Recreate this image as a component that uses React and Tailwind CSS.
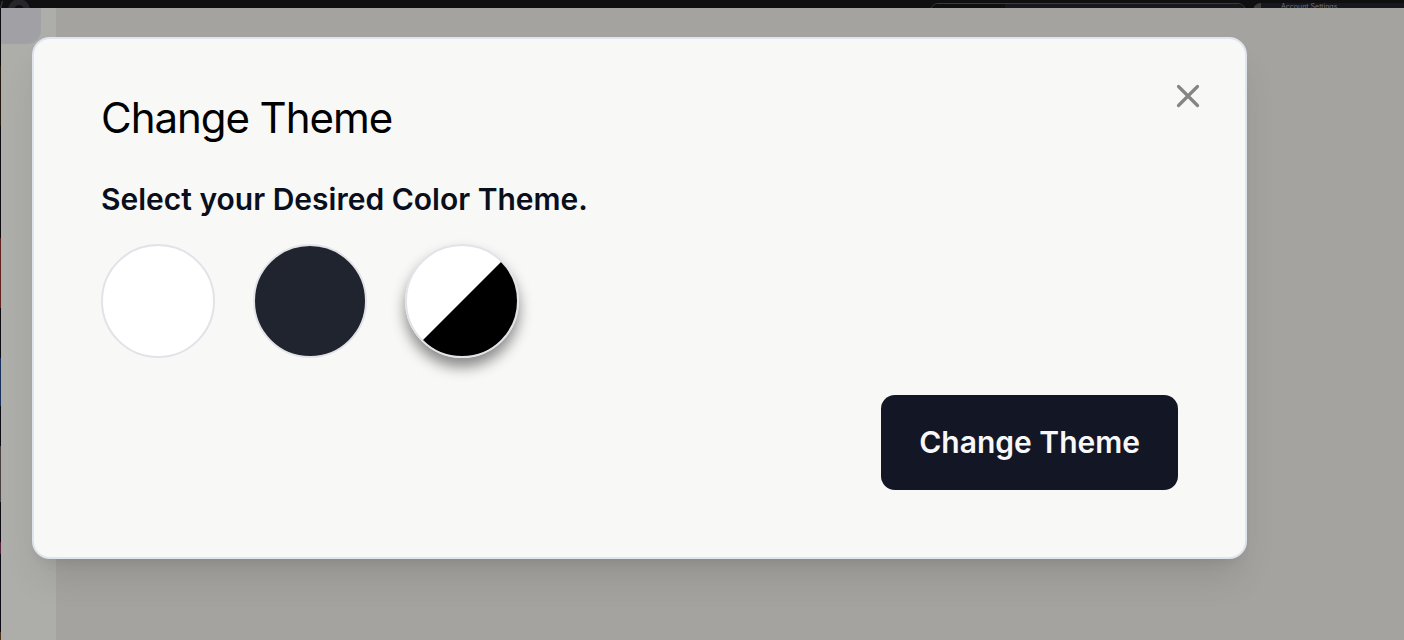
import { useState } from "react";

const themes = [
  { id: "light", label: "Light", swatch: "bg-white" },
  { id: "dark", label: "Dark", swatch: "bg-[#20242e]" },
  {
    id: "system",
    label: "System",
    swatch: "bg-[linear-gradient(135deg,#fff_49.6%,#000_50.4%)]",
  },
];

const edgeColors = [
  "h-[58px] bg-[#0c0a0c]",
  "h-[60px] bg-[#24190f]",
  "h-28 bg-[#0d0b10]",
  "h-[70px] bg-[#61211c]",
  "h-[50px] bg-[#0d0b12]",
  "h-12 bg-[#17305c]",
  "h-10 bg-[#0c0a12]",
  "h-14 bg-[#47413f]",
  "h-10 bg-[#0d0b12]",
  "h-3 bg-[#54223f]",
  "h-[78px] bg-[#0c0a12]",
  "grow bg-[#4c3318]",
];

function TopStrip() {
  return (
    <header className="flex h-2 items-start overflow-hidden bg-[#0f0f11]">
      <span className="h-2 w-2 text-[8px] leading-none text-[#555557]">/</span>
      <span className="-mt-px h-[22px] w-[22px] shrink-0 rounded-full border-[6px] border-[#26262a]" />
      <div className="grow" />
      <div className="mt-[3px] flex h-4 w-[316px] shrink-0 overflow-hidden rounded-lg border border-[#3a3a3c]">
        <span className="w-[74px] bg-[#0f0f11]" />
        <span className="grow bg-[#17171d]" />
      </div>
      <div className="ml-[7px] mt-[3px] flex h-4 w-[151px] shrink-0 overflow-hidden rounded-l-lg bg-[#171720]">
        <span className="w-2 bg-[#3c3c3e]" />
        <span className="ml-5 text-[7px] leading-[7px] text-[#707074]">Account Settings</span>
      </div>
    </header>
  );
}

function ThemeDialog() {
  const [theme, setTheme] = useState("system");
  return (
    <section
      role="dialog"
      aria-labelledby="theme-title"
      className="relative mt-[29px] mr-[157px] mb-[81px] ml-[31px] grow rounded-[18px] border-2 border-[#e0e4ee] bg-[#f8f8f6] px-[67px] pt-[54px] pb-[66px] shadow-[0_24px_36px_-7px_rgba(0,0,0,0.1),0_10px_14px_-9px_rgba(0,0,0,0.1)]"
    >
      <h2 id="theme-title" className="text-[42px] leading-[50px] font-normal tracking-tight text-black">
        Change Theme
      </h2>
      <fieldset className="mt-9">
        <legend className="text-[30px] leading-10 font-semibold text-[#090f1c]">
          Select your Desired Color Theme.
        </legend>
        <div className="mt-[25px] flex gap-[38px]">
          {themes.map((item) => (
            <input
              key={item.id}
              type="radio"
              name="theme"
              aria-label={item.label}
              checked={theme === item.id}
              onChange={() => setTheme(item.id)}
              className={`h-[114px] w-[114px] shrink-0 cursor-pointer appearance-none rounded-full border-2 border-[#e2e2e9] checked:shadow-[0_9px_14px_rgba(0,0,0,0.45)] ${item.swatch}`}
            />
          ))}
        </div>
      </fieldset>
      <div className="mt-[37px] flex justify-end">
        <button
          type="button"
          className="rounded-[14px] bg-[#131624] px-[38px] py-[27px] text-[30px] leading-[41px] font-semibold text-[#f8f8fa]"
        >
          Change Theme
        </button>
      </div>
      <button type="button" aria-label="Close" className="absolute top-[38px] right-[38px] text-[#858584]">
        <svg className="h-[38px] w-[38px]" viewBox="0 0 38 38" fill="none" stroke="currentColor" strokeWidth="3.2" strokeLinecap="round">
          <path d="M9.5 9.5 28.5 28.5M28.5 9.5 9.5 28.5" />
        </svg>
      </button>
    </section>
  );
}

export default function App() {
  return (
    <div className="flex min-h-screen flex-col bg-[#a4a39f] font-['Inter',sans-serif]">
      <TopStrip />
      <main className="relative flex grow">
        <div className="flex w-px flex-col" aria-hidden="true">
          {edgeColors.map((color) => (
            <span key={color} className={color} />
          ))}
        </div>
        <div className="absolute inset-y-0 left-px w-[55px] bg-[#adada9]" aria-hidden="true">
          <div className="h-9 w-10 rounded-br-[14px] bg-[#a1a0a5]" />
        </div>
        <ThemeDialog />
      </main>
    </div>
  );
}
